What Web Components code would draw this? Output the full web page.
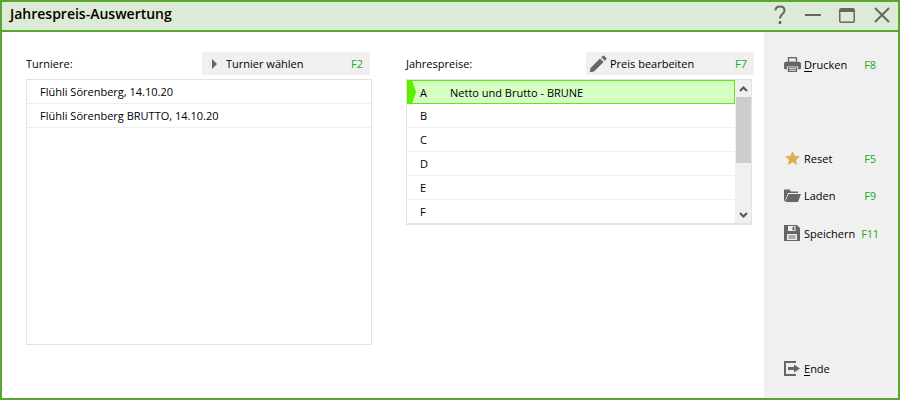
<!DOCTYPE html>
<html>
<head>
<meta charset="utf-8">
<title>Jahrespreis-Auswertung</title>
<style>
html, body { margin: 0; padding: 0; background: #fff; }
body { font: 11px "Open Sans", sans-serif; color: #000; }
</style>
</head>
<body>
<app-window>
    <title-bar slot="title">Jahrespreis-Auswertung</title-bar>

    <list-panel label="Turniere:" action="Turnier wählen" fkey="F2" icon="play" height="266">
        <list-row>Flühli Sörenberg, 14.10.20</list-row>
        <list-row>Flühli Sörenberg BRUTTO, 14.10.20</list-row>
    </list-panel>

    <list-panel label="Jahrespreise:" action="Preis bearbeiten" fkey="F7" icon="pencil" height="146" scroll>
        <list-row letter="A" selected>Netto und Brutto - BRUNE</list-row>
        <list-row letter="B"></list-row>
        <list-row letter="C"></list-row>
        <list-row letter="D"></list-row>
        <list-row letter="E"></list-row>
        <list-row letter="F" last></list-row>
    </list-panel>

    <side-button slot="side" icon="print" fkey="F8" mnemonic="D" style="margin-top:20px">rucken</side-button>
    <side-button slot="side" icon="star" fkey="F5" style="margin-top:70px">Reset</side-button>
    <side-button slot="side" icon="folder" fkey="F9" style="margin-top:13px">Laden</side-button>
    <side-button slot="side" icon="save" fkey="F11" style="margin-top:14px">Speichern</side-button>
    <side-button slot="side" icon="exit" mnemonic="E" style="margin-top:111px">nde</side-button>
</app-window>

<script>
const ICONS = {
    play: '<svg width="7" height="10" viewBox="0 0 7 10"><path d="M1 0l5 5-5 5z" fill="#666"/></svg>',
    pencil: '<svg width="18" height="18" viewBox="0 0 18 18"><path d="M.8 17.200l.7-4.200L11 3.400l3.600 3.600L5 16.500z" fill="#666"/><path d="M12.200 2.200l1.300-1.300a1.300 1.300 0 0 1 1.800 0l1.800 1.800a1.300 1.300 0 0 1 0 1.800l-1.300 1.300z" fill="#666"/></svg>',
    print: '<svg width="17" height="15" viewBox="0 0 18 16"><path d="M4 0h9l1 1v4H4z" fill="#666"/><path d="M5.500 1.500h7V5h-7z" fill="#f0f0f0"/><path d="M2 5h14a2 2 0 0 1 2 2v5a1 1 0 0 1-1 1h-2v-3H3v3H1a1 1 0 0 1-1-1V7a2 2 0 0 1 2-2z" fill="#666"/><path d="M4 11h10v5H4z" fill="#666"/><path d="M5.500 12h7v1h-7zM5.500 14h7v1h-7z" fill="#f0f0f0"/></svg>',
    star: '<svg width="15" height="14" viewBox="0 0 16 15" style="margin-left:1px"><path d="M8 0l2.300 5 5.700.6-4.200 3.700L13 15 8 12.100 3 15l1.200-5.700L0 5.600 5.700 5z" fill="#dcb04e"/></svg>',
    folder: '<svg width="17" height="14" viewBox="0 0 17 14"><path d="M0 13V1.500h5.500l1.500 2h7V5H4L1 13z" fill="#666"/><path d="M4.500 6H17l-3 8H1.200z" fill="#666"/></svg>',
    save: '<svg width="16" height="16" viewBox="0 0 16 16"><path fill-rule="evenodd" d="M0 0h13l3 3v13H0zM4 1v5h7.500V1zM8.500 1.800h2v3.400h-2zM3 9v6h10V9z" fill="#666"/><path d="M4.500 10.500h7v1h-7zM4.500 12.500h7v1h-7z" fill="#666"/></svg>',
    exit: '<svg width="16" height="15" viewBox="0 0 16 15"><path d="M0 0h12v2H2v11h10v2H0z" fill="#666"/><path d="M4 6h6V3.500L16 7.500l-6 4V9H4z" fill="#666"/></svg>'
};

class AppWindow extends HTMLElement {
    constructor() {
        super();
        this.attachShadow({ mode: 'open' });
        this.shadowRoot.innerHTML = `
            <style>
                :host {
                    display: flex;
                    flex-direction: column;
                    box-sizing: border-box;
                    width: 900px;
                    height: 400px;
                    border: 2px solid #5aa532;
                    background: #fff;
                }
                .body { flex: 1; display: flex; min-height: 0; }
                .content {
                    flex: 1;
                    display: flex;
                    align-items: flex-start;
                    gap: 34px;
                    padding: 20px 0 0 24px;
                }
                .side {
                    width: 134px;
                    background: #f0f0f0;
                    display: flex;
                    flex-direction: column;
                }
            </style>
            <slot name="title"></slot>
            <div class="body">
                <div class="content"><slot></slot></div>
                <div class="side"><slot name="side"></slot></div>
            </div>
        `;
    }
}
customElements.define('app-window', AppWindow);

class TitleBar extends HTMLElement {
    constructor() {
        super();
        this.attachShadow({ mode: 'open' });
        this.shadowRoot.innerHTML = `
            <style>
                :host {
                    display: flex;
                    align-items: center;
                    justify-content: space-between;
                    box-sizing: border-box;
                    height: 30px;
                    padding: 0 8px 5px 8px;
                    background: #dcebd5;
                    border-bottom: 2px solid #5aa532;
                    font: 600 14px "Open Sans", sans-serif;
                    color: #000;
                }
                .ctrls { display: flex; align-items: center; gap: 15px; margin-top: 3px; }
                svg { display: block; }
            </style>
            <span><slot></slot></span>
            <div class="ctrls">
                <svg width="18" height="20" viewBox="0 0 18 20" fill="none" stroke="#666" stroke-width="2"><path d="M3.500 5.500C3.500 3 5.500 1.500 8 1.500s4.500 1.500 4.500 4c0 3.500-4.500 3.500-4.500 8"/><path d="M8 16v3" stroke-width="2.400"/></svg>
                <svg width="16" height="20" viewBox="0 0 16 20"><path d="M0 9h16v2H0z" fill="#666"/></svg>
                <svg width="16" height="15" viewBox="0 0 16 15" style="margin-left:3px"><rect x=".75" y=".75" width="14.500" height="13.500" rx="1.500" fill="none" stroke="#666" stroke-width="1.500"/><path d="M1 1h14v3H1z" fill="#666"/></svg>
                <svg width="16" height="16" viewBox="0 0 16 16" style="margin-left:4px" stroke="#666" stroke-width="2"><path d="M1 1l14 14M15 1L1 15"/></svg>
            </div>
        `;
    }
}
customElements.define('title-bar', TitleBar);

class ListPanel extends HTMLElement {
    constructor() {
        super();
        this.attachShadow({ mode: 'open' });
    }

    connectedCallback() {
        const scroll = this.hasAttribute('scroll');
        const iconName = this.getAttribute('icon');
        this.shadowRoot.innerHTML = `
            <style>
                :host {
                    display: block;
                    width: 346px;
                    font: 11px "Open Sans", sans-serif;
                    color: #000;
                }
                .head {
                    display: flex;
                    align-items: center;
                    justify-content: space-between;
                    height: 23px;
                    margin-bottom: 4px;
                    margin-right: ${scroll ? -2 : 2}px;
                }
                .btn {
                    display: flex;
                    align-items: center;
                    box-sizing: border-box;
                    width: 168px;
                    height: 23px;
                    padding-left: ${scroll ? 3 : 9}px;
                    padding-right: 7px;
                    background: #f0f0f0;
                }
                .ico { display: flex; width: ${scroll ? 21 : 15}px; }
                .fkey { margin-left: auto; color: #22a81e; }
                .box {
                    box-sizing: border-box;
                    height: ${this.getAttribute('height')}px;
                    border: 1px solid #e3e3e3;
                    border-bottom-width: ${scroll ? 2 : 1}px;
                    display: flex;
                }
                .rows { flex: 1; min-width: 0; }
                .bar {
                    width: 16px;
                    background: #f0f0f0;
                    display: flex;
                    flex-direction: column;
                    align-items: center;
                }
                .arrow { height: 17px; display: flex; align-items: center; }
                .thumb { width: 15px; height: 66px; background: #cdcdcd; }
                .grow { flex: 1; }
                svg { display: block; }
            </style>
            <div class="head">
                <span>${this.getAttribute('label')}</span>
                <div class="btn">
                    <span class="ico">${ICONS[iconName]}</span>
                    <span>${this.getAttribute('action')}</span>
                    <span class="fkey">${this.getAttribute('fkey')}</span>
                </div>
            </div>
            <div class="box">
                <div class="rows"><slot></slot></div>
                ${scroll ? `
                <div class="bar">
                    <span class="arrow"><svg width="9" height="6" viewBox="0 0 9 6"><path d="M1 5l3.500-3.500L8 5" fill="none" stroke="#555" stroke-width="2"/></svg></span>
                    <div class="thumb"></div>
                    <div class="grow"></div>
                    <span class="arrow"><svg width="9" height="6" viewBox="0 0 9 6"><path d="M1 1l3.500 3.500L8 1" fill="none" stroke="#555" stroke-width="2"/></svg></span>
                </div>` : ''}
            </div>
        `;
    }
}
customElements.define('list-panel', ListPanel);

class ListRow extends HTMLElement {
    constructor() {
        super();
        this.attachShadow({ mode: 'open' });
    }

    connectedCallback() {
        const letter = this.getAttribute('letter');
        this.shadowRoot.innerHTML = `
            <style>
                :host {
                    display: flex;
                    align-items: center;
                    box-sizing: border-box;
                    height: 24px;
                    padding-left: 13px;
                    padding-bottom: 1px;
                    border-bottom: 1px solid #eeeeee;
                    position: relative;
                }
                :host([last]) { border-bottom: 0; }
                :host([selected]) {
                    background: #d5ffc2;
                    border: 1px solid #62e81a;
                    padding-left: 12px;
                    padding-bottom: 0;
                }
                .letter { width: 30px; }
                .mark {
                    position: absolute;
                    left: -1px;
                    top: -1px;
                    width: 9px;
                    height: 24px;
                    background: #5cf000;
                    clip-path: polygon(0 0, 55% 0, 100% 50%, 55% 100%, 0 100%);
                }
            </style>
            ${this.hasAttribute('selected') ? '<span class="mark"></span>' : ''}
            ${letter ? `<span class="letter">${letter}</span>` : ''}
            <span><slot></slot></span>
        `;
    }
}
customElements.define('list-row', ListRow);

class SideButton extends HTMLElement {
    constructor() {
        super();
        this.attachShadow({ mode: 'open' });
    }

    connectedCallback() {
        const mnemonic = this.getAttribute('mnemonic');
        const fkey = this.getAttribute('fkey');
        this.shadowRoot.innerHTML = `
            <style>
                :host {
                    display: flex;
                    align-items: center;
                    height: 24px;
                    padding-left: 20px;
                    font: 11px "Open Sans", sans-serif;
                    color: #000;
                }
                .ico { width: 20px; display: flex; }
                .txt { width: 53px; white-space: nowrap; }
                u { text-underline-offset: 2px; }
                .fkey { color: #22a81e; width: 26px; text-align: center; letter-spacing: -0.3px; }
                svg { display: block; }
            </style>
            <span class="ico">${ICONS[this.getAttribute('icon')]}</span>
            <span class="txt">${mnemonic ? `<u>${mnemonic}</u>` : ''}<slot></slot></span>
            ${fkey ? `<span class="fkey">${fkey}</span>` : ''}
        `;
    }
}
customElements.define('side-button', SideButton);
</script>
</body>
</html>
